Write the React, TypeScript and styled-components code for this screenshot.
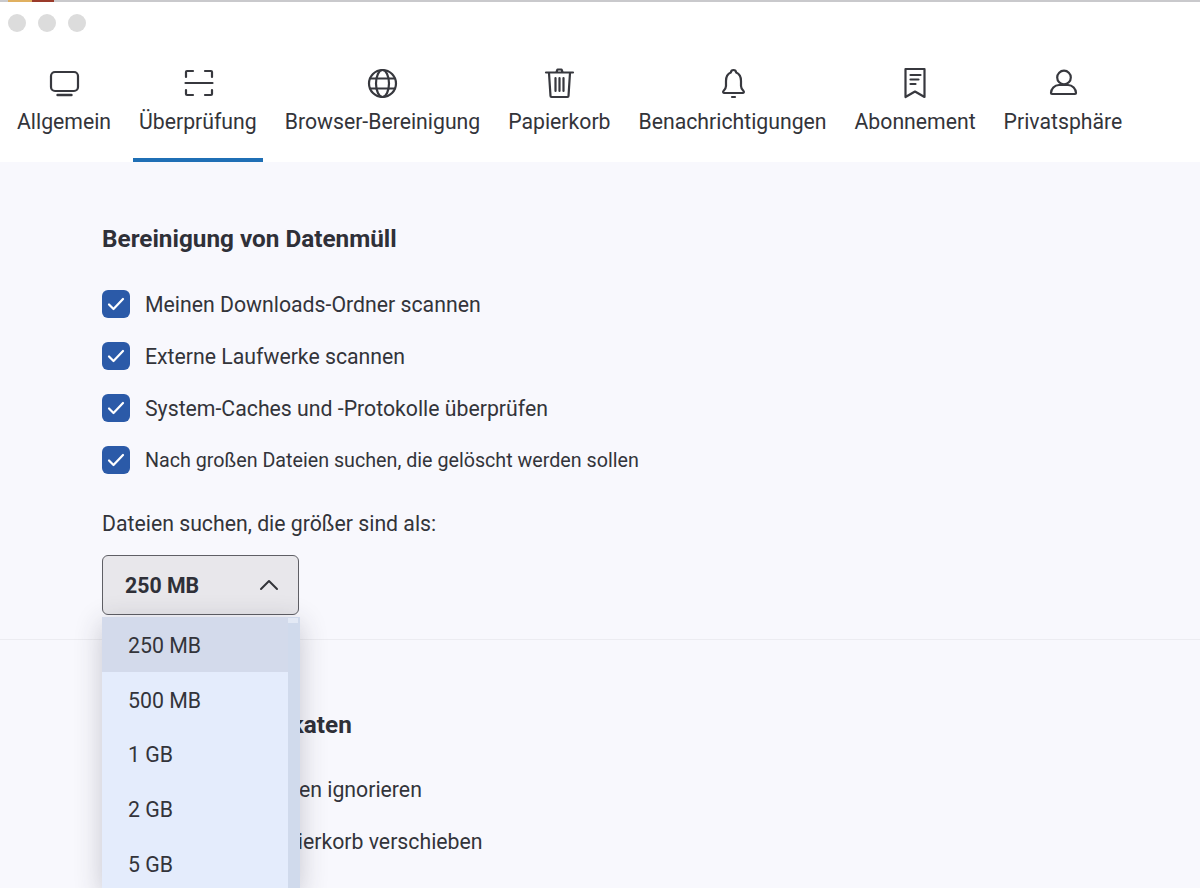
import styled, { createGlobalStyle } from 'styled-components';
import type { ReactNode } from 'react';

const GlobalStyle = createGlobalStyle`
  html, body {
    margin: 0;
    height: 888px;
    overflow: hidden;
    background: #f8f8fd;
    font-family: Roboto, "Liberation Sans", sans-serif;
    color: #2f3038;
  }
  * { box-sizing: border-box; }
`;

const Icon = ({ children }: { children: ReactNode }) => (
  <svg width="36" height="36" viewBox="0 0 36 36" fill="none" stroke="#37383e" strokeWidth="2.2" strokeLinecap="round" strokeLinejoin="round">
    {children}
  </svg>
);

const tabs: { label: string; active?: boolean; icon: ReactNode }[] = [
  {
    label: 'Allgemein',
    icon: (
      <>
        <rect x="5" y="7" width="27" height="19" rx="4" />
        <path d="M11.500 30h14" strokeWidth="2.400" />
      </>
    ),
  },
  {
    label: 'Überprüfung',
    active: true,
    icon: (
      <>
        <path d="M6 12V7a1 1 0 0 1 1-1h6M25 6h6a1 1 0 0 1 1 1v5M6 25v4a1 1 0 0 0 1 1h6M25 30h6a1 1 0 0 0 1-1v-4" />
        <path d="M5.500 18h27" />
      </>
    ),
  },
  {
    label: 'Browser-Bereinigung',
    icon: (
      <>
        <circle cx="18.500" cy="18.500" r="13.500" />
        <ellipse cx="18.500" cy="18.500" rx="6.500" ry="13.500" />
        <path d="M6.500 13.500h24M6.500 23.500h24" />
      </>
    ),
  },
  {
    label: 'Papierkorb',
    icon: (
      <>
        <path d="M5 7.500h27M15.500 7l1-2.500h4l1 2.500" />
        <path d="M8 8l1.500 23a1 1 0 0 0 1 1h16a1 1 0 0 0 1-1L29 8" />
        <path d="M14.500 13v13M18.500 13v13M22.500 13v13" />
      </>
    ),
  },
  {
    label: 'Benachrichtigungen',
    icon: (
      <>
        <path d="M18.500 5c-1.500 0-2.500 1-2.700 2.500C12 9 11 12 11 16v5c0 2-1 3.500-2.500 5-.8.8-.3 2 .8 2h18.400c1.100 0 1.600-1.200.8-2-1.500-1.500-2.500-3-2.500-5v-5c0-4-1-7-4.800-8.500C21 6 20 5 18.500 5z" />
        <path d="M17 32h3" />
      </>
    ),
  },
  {
    label: 'Abonnement',
    icon: (
      <>
        <path d="M8.500 4h19v28l-9.500-5.500-9.500 5.500z" />
        <path d="M13.500 10h10M13.500 14.500h8M13.500 19h5" />
      </>
    ),
  },
  {
    label: 'Privatsphäre',
    icon: (
      <>
        <circle cx="19" cy="12.500" r="6.800" />
        <path d="M7 29a1 1 0 0 1-1-1c0-4 3.500-8 8-8h9c4.500 0 8 4 8 8a1 1 0 0 1-1 1z" />
      </>
    ),
  },
];

const junkOptions = [
  { label: 'Meinen Downloads-Ordner scannen' },
  { label: 'Externe Laufwerke scannen' },
  { label: 'System-Caches und -Protokolle überprüfen' },
  { label: 'Nach großen Dateien suchen, die gelöscht werden sollen', small: true },
];

const duplicateOptions = [
  { label: 'Ordner mit Dateien ignorieren' },
  { label: 'Auch in den Papierkorb verschieben' },
];

const sizes = ['250 MB', '500 MB', '1 GB', '2 GB', '5 GB'];

function CheckRow({ label, small }: { label: string; small?: boolean }) {
  return (
    <Row>
      <CheckBox>
        <svg width="20" height="20" viewBox="0 0 20 20" fill="none" stroke="#fff" strokeWidth="2.200" strokeLinecap="round" strokeLinejoin="round">
          <path d="M3 10.500l4.500 4.500L17 5" />
        </svg>
      </CheckBox>
      <RowLabel $small={small}>{label}</RowLabel>
    </Row>
  );
}

export default function App() {
  return (
    <Page>
      <GlobalStyle />
      <TopEdge />
      <TitleBar>
        <Light />
        <Light />
        <Light />
      </TitleBar>
      <TabBar>
        {tabs.map((tab) => (
          <Tab key={tab.label} $active={tab.active}>
            <Icon>{tab.icon}</Icon>
            <TabLabel>{tab.label}</TabLabel>
          </Tab>
        ))}
      </TabBar>
      <Content>
        <Section>
          <Heading>Bereinigung von Datenmüll</Heading>
          {junkOptions.map((option) => (
            <CheckRow key={option.label} label={option.label} small={option.small} />
          ))}
          <FieldLabel>Dateien suchen, die größer sind als:</FieldLabel>
          <SelectWrap>
            <SelectButton>
              250 MB
              <svg width="20" height="12" viewBox="0 0 20 12" fill="none" stroke="#33343a" strokeWidth="2" strokeLinecap="round" strokeLinejoin="round">
                <path d="M2 10l8-8 8 8" />
              </svg>
            </SelectButton>
            <Menu>
              <MenuList>
                {sizes.map((size, i) => (
                  <MenuItem key={size} $selected={i === 0}>
                    {size}
                  </MenuItem>
                ))}
              </MenuList>
              <ScrollTrack />
            </Menu>
          </SelectWrap>
        </Section>
        <Section $divided>
          <Heading $tight>Suche nach Duplikaten</Heading>
          {duplicateOptions.map((option) => (
            <CheckRow key={option.label} label={option.label} />
          ))}
        </Section>
      </Content>
    </Page>
  );
}

const Page = styled.div`
  height: 888px;
  overflow: hidden;
`;

const TopEdge = styled.div`
  height: 2px;
  background: linear-gradient(
    90deg,
    #c9c9cc 8px,
    #e0b060 8px,
    #e0b060 32px,
    #9a3a2a 32px,
    #9a3a2a 54px,
    #c9c9cc 54px
  );
`;

const TitleBar = styled.div`
  display: flex;
  gap: 12px;
  height: 44px;
  padding: 12px 0 0 8px;
  background: #fff;
`;

const Light = styled.span`
  width: 18px;
  height: 18px;
  border-radius: 50%;
  background: #dcdcdc;
`;

const TabBar = styled.nav`
  display: flex;
  gap: 16px;
  height: 116px;
  padding-left: 11px;
  background: #fff;
`;

const Tab = styled.div<{ $active?: boolean }>`
  display: flex;
  flex-direction: column;
  align-items: center;
  padding: 19px 6px 0;
  border-bottom: 4px solid ${(p) => (p.$active ? '#1f6fb5' : 'transparent')};
`;

const TabLabel = styled.span`
  margin-top: 7px;
  font-size: 21.220px;
  line-height: 28px;
  color: #33343a;
  white-space: nowrap;
`;

const Content = styled.main`
  background: #f8f8fd;
`;

const Section = styled.section<{ $divided?: boolean }>`
  padding: ${(p) => (p.$divided ? '68px' : '60px')} 0 ${(p) => (p.$divided ? '0' : '24px')} 102px;
  border-top: ${(p) => (p.$divided ? '1px solid #ececf1' : 'none')};
`;

const Heading = styled.h2<{ $tight?: boolean }>`
  margin: 0 0 ${(p) => (p.$tight ? '21px' : '22px')};
  font-size: 24.300px;
  line-height: 34px;
  font-weight: 700;
  color: #2f3038;
`;

const Row = styled.div`
  display: flex;
  align-items: center;
  gap: 15px;
  height: 52px;
`;

const CheckBox = styled.span`
  display: flex;
  align-items: center;
  justify-content: center;
  width: 28px;
  height: 28px;
  border-radius: 6px;
  background: #2b5aa8;
`;

const RowLabel = styled.span<{ $small?: boolean }>`
  font-size: ${(p) => (p.$small ? '19.700px' : '21.250px')};
  color: #33343a;
  white-space: nowrap;
`;

const FieldLabel = styled.div`
  margin-top: 24px;
  font-size: 21.250px;
  line-height: 28px;
  color: #33343a;
`;

const SelectWrap = styled.div`
  position: relative;
  width: 198px;
  margin-top: 17px;
`;

const SelectButton = styled.div`
  display: flex;
  align-items: center;
  justify-content: space-between;
  width: 197px;
  height: 60px;
  padding: 0 19px 0 22px;
  border: 1.500px solid #5f5f65;
  border-radius: 6px;
  background: #e8e7eb;
  font-size: 21.300px;
  font-weight: 700;
  color: #2f3038;
`;

const Menu = styled.div`
  position: absolute;
  top: 62px;
  left: 0;
  z-index: 2;
  display: flex;
  width: 198px;
  background: #d0daec;
  box-shadow: 0 6px 26px rgba(40, 40, 60, 0.24);
`;

const MenuList = styled.div`
  flex: 1;
`;

const MenuItem = styled.div<{ $selected?: boolean }>`
  display: flex;
  align-items: center;
  height: 54.700px;
  padding: 2px 0 0 26px;
  font-size: 21.300px;
  color: #33343a;
  background: ${(p) => (p.$selected ? '#d3daeb' : '#e4ecfc')};
`;

const ScrollTrack = styled.div`
  width: 12px;
  &::before {
    content: '';
    display: block;
    height: 5px;
    margin: 1px 2px 0 0;
    background: #e3e9f5;
  }
`;
